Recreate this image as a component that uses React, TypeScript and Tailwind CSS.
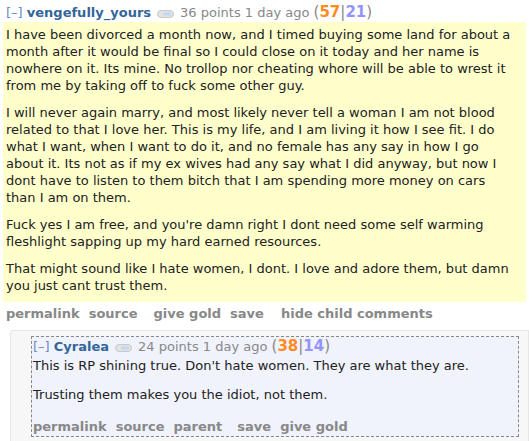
import React from "react";

const Pill = () => (
  <svg width="17" height="8" viewBox="0 0 17 8" className="inline-block mx-[6px] align-middle">
    <rect x="0.5" y="0.5" width="16" height="7" rx="3.5" fill="#e2e2e2" stroke="#c8c8c8" />
    <rect x="6" y="2.5" width="8" height="3" rx="1.5" fill="#bcd8f4" />
  </svg>
);

const Score = ({ up, down }: { up: string; down: string }) => (
  <span className="text-[15px]">
    (<span className="font-bold text-[#ff8b24]">{up}</span>|<span className="font-bold text-[#9494ff]">{down}</span>)
  </span>
);

export default function App() {
  return (
    <div className="w-[529px] h-[441px] overflow-hidden bg-white text-[13px] leading-[17px] text-[#222]" style={{ fontFamily: '"DejaVu Sans", Verdana, sans-serif' }}>
      <div className="pt-[3px]">
        <div className="pl-[6px] text-[#888] h-[19px] leading-[19px] whitespace-nowrap">
          <span className="text-[#6a8bbf]">[–]</span>{" "}
          <span className="font-bold text-[#369]">vengefully_yours</span>
          <Pill />
          <span>36 points 1 day ago </span>
          <Score up="57" down="21" />
        </div>
        <div className="mx-[3px] bg-[#ffffcc] pl-[3px] pr-[8px] pt-[4px] pb-[8px] flex flex-col gap-[10px]">
          <p>I have been divorced a month now, and I timed buying some land for about a month after it would be final so I could close on it today and her name is nowhere on it. Its mine. No trollop nor cheating whore will be able to wrest it from me by taking off to fuck some other guy.</p>
          <p>I will never again marry, and most likely never tell a woman I am not blood related to that I love her. This is my life, and I am living it how I see fit. I do what I want, when I want to do it, and no female has any say in how I go about it. Its not as if my ex wives had any say what I did anyway, but now I dont have to listen to them bitch that I am spending more money on cars than I am on them.</p>
          <p>Fuck yes I am free, and you're damn right I dont need some self warming fleshlight sapping up my hard earned resources.</p>
          <p>That might sound like I hate women, I dont. I love and adore them, but damn you just cant trust them.</p>
        </div>
        <div className="pl-[6px] pt-[2px] h-[24px] leading-[20px] font-bold text-[#888] flex gap-[9px] whitespace-nowrap">
          <span>permalink</span>
          <span>source</span>
          <span className="ml-[7px]">give gold</span>
          <span>save</span>
          <span className="ml-[8px]">hide child comments</span>
        </div>
        <div className="ml-[10px] mt-[4px] bg-[#f7f7f7] border border-[#e6e6e6] rounded-tl-[3px] pt-[5px] pl-[20px] pr-[9px] pb-[8px]">
          <div className="border border-dashed border-[#888] bg-[#f0f3fc] pl-[1px]">
            <div className="text-[#888] h-[18px] leading-[18px] whitespace-nowrap">
              <span className="text-[#6a8bbf]">[–]</span>{" "}
              <span className="font-bold text-[#369]">Cyralea</span>
              <Pill />
              <span>24 points 1 day ago </span>
              <Score up="38" down="14" />
            </div>
            <div className="flex flex-col gap-[12px] pt-[2px]">
              <p>This is RP shining true. Don't hate women. They are what they are.</p>
              <p>Trusting them makes you the idiot, not them.</p>
            </div>
            <div className="pt-[15px] h-[33px] leading-[18px] font-bold text-[#888] flex gap-[9px] whitespace-nowrap">
              <span>permalink</span>
              <span>source</span>
              <span>parent</span>
              <span className="ml-[6px]">save</span>
              <span>give gold</span>
            </div>
          </div>
        </div>
      </div>
    </div>
  );
}
